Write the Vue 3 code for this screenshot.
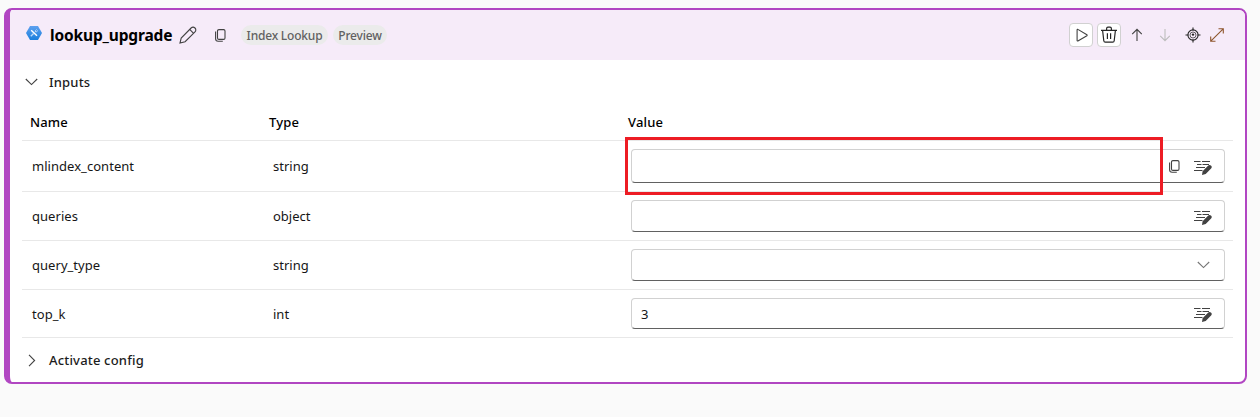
<script setup>
const rows = [
  { name: 'mlindex_content', type: 'string', value: '', h: 51, fh: 34, copy: true },
  { name: 'queries', type: 'object', value: '', h: 49, fh: 32 },
  { name: 'query_type', type: 'string', value: '', h: 49, fh: 32, select: true },
  { name: 'top_k', type: 'int', value: '3', h: 48, fh: 31 }
]
</script>

<template>
  <div class="page">
    <section class="card">
      <header class="head">
        <svg class="logo" width="16" height="14" viewBox="0 0 16 14">
          <defs>
            <linearGradient id="hex" x1="0" y1="0" x2="0" y2="1">
              <stop offset="0" stop-color="#5ea0ef" />
              <stop offset="1" stop-color="#1a7fdd" />
            </linearGradient>
          </defs>
          <path d="M4 0h8l4 7-4 7H4L0 7z" fill="url(#hex)" />
          <path d="M5.2 4.2l5.8 5.6" stroke="#fff" stroke-width="1.4" />
          <path d="M4.8 10.2l3-3" stroke="#b9d8f8" stroke-width="1.3" />
          <path d="M10.6 3.5L9.4 4.7v1h1.2l1.2-1.1" fill="none" stroke="#d5e8fb" stroke-width=".9" />
        </svg>
        <h1 class="title">lookup_upgrade</h1>
        <svg class="pencil" width="18" height="18" viewBox="0 0 18 18">
          <path d="M1 17l1.2-5L12.1 2a2.75 2.75 0 0 1 3.9 3.9L6.1 15.7zM10.7 3.4l3.9 3.9" />
        </svg>
        <svg class="copy" width="11" height="13" viewBox="0 0 11 13">
          <rect x="2.5" y=".6" width="7.5" height="9.8" rx="1.4" />
          <path d="M.6 2.4v7.4a2.5 2.5 0 0 0 2.5 2.5h4.7" />
        </svg>
        <span class="tag index">Index Lookup</span>
        <span class="tag preview">Preview</span>
        <div class="tools">
          <button class="box">
            <svg width="24" height="24" viewBox="0 0 24 24"><path d="M8.1 6.8v10.7a.5.5 0 0 0 .8.4l9-5.2a.6.6 0 0 0 0-1L8.9 6.4a.5.5 0 0 0-.8.4z" /></svg>
          </button>
          <button class="box">
            <svg width="24" height="24" viewBox="0 0 24 24"><path class="dark" d="M4 7.3h16M9.6 7.1V5.7c0-.9.6-1.5 1.4-1.5h2c.8 0 1.4.6 1.4 1.5v1.4M5.6 7.5l1.2 10.3c.1.9.7 1.4 1.5 1.4h7.4c.8 0 1.4-.5 1.5-1.4l1.2-10.3M10.4 10.3v5.7M13.6 10.3v5.7" /></svg>
          </button>
          <svg class="up" width="12" height="14" viewBox="0 0 12 14"><path d="M6 13V1.5M1.2 6.2L6 1.3l4.8 4.9" /></svg>
          <svg class="down" width="12" height="14" viewBox="0 0 12 14"><path d="M6 1v11.5M1.2 7.8L6 12.7l4.8-4.9" /></svg>
          <svg class="target" width="16" height="16" viewBox="0 0 16 16">
            <circle cx="8" cy="8" r="5.1" /><path class="thin" d="M5 8a3 3 0 0 1 6 0 3 3 0 0 1-6 0" /><circle cx="8" cy="7.6" r="1.2" class="dot" />
            <path d="M8 .5v3M8 12.5v3M.5 8h3M12.5 8h3" />
          </svg>
          <svg class="expand" width="14" height="14" viewBox="0 0 14 14"><path d="M.8 13.2L13.2.8M8.5.7h4.8v4.8M.7 8.5v4.8h4.8" /></svg>
        </div>
      </header>

      <div class="group inputs">
        <svg class="chev" width="13" height="8" viewBox="0 0 13 8"><path d="M.8 1l5.7 5.6L12.2 1" /></svg>
        <span>Inputs</span>
      </div>

      <div class="table">
        <div class="row heading">
          <span class="w-name">Name</span><span class="w-type">Type</span><span class="w-value">Value</span>
        </div>
        <div v-for="r in rows" :key="r.name" class="row" :style="{ height: r.h + 'px' }">
          <span class="name">{{ r.name }}</span>
          <span class="type">{{ r.type }}</span>
          <div class="field" :style="{ height: r.fh + 'px' }">
            <span class="val">{{ r.value }}</span>
            <svg v-if="r.copy" class="copy" width="11" height="13" viewBox="0 0 11 13">
              <rect x="2.5" y=".6" width="7.5" height="9.8" rx="1.4" />
              <path d="M.6 2.4v7.4a2.5 2.5 0 0 0 2.5 2.5h4.7" />
            </svg>
            <svg v-if="r.select" class="chev sel" width="13" height="8" viewBox="0 0 13 8"><path d="M.8 1l5.7 5.6L12.2 1" /></svg>
            <svg v-else class="edit" width="18" height="15" viewBox="0 0 18 15">
              <path class="lines" d="M0 1.5h6.5M8 1.5h8M3 4.5h4.5M8.5 4.5h6.5M2 7.5h9M0 10.5h8.5" />
              <path class="pen" d="M8 14.9l.6-3.6 5.4-5.6a2 2 0 0 1 3.1 2.8l-5.4 5.6z" />
            </svg>
          </div>
          <div v-if="r.copy" class="highlight"></div>
        </div>
      </div>

      <div class="group activate">
        <svg class="chev right" width="8" height="13" viewBox="0 0 8 13"><path d="M1 .8l5.6 5.7L1 12.2" /></svg>
        <span>Activate config</span>
      </div>
    </section>
  </div>
</template>

<style>
body { background: #fafafa; }
</style>

<style scoped>
.page {
  box-sizing: border-box;
  height: 417px;
  padding: 8px 13px 33px 4px;
  background: #fafafa;
  font-family: "Noto Sans", "Open Sans", sans-serif;
  font-size: 13px;
  color: #161616;
}
.card {
  box-sizing: border-box;
  height: 376px;
  border: 2px solid #b146c2;
  border-left-width: 6px;
  border-radius: 8px;
  background: #fff;
  overflow: hidden;
}
svg { flex: none; display: block; fill: none; stroke: #424242; stroke-width: 1.1; }
.head { display: flex; align-items: center; height: 50px; background: #f6ebf9; }
.logo { margin: -4px 8px 0 16px; stroke: none; }
.title { margin: 0; width: 129px; font-size: 15.5px; font-weight: 700; line-height: 22px; color: #000; white-space: nowrap; letter-spacing: -.15px; }
.pencil { margin-top: -1px; }
.copy { margin-left: 17px; }
.head .copy { margin-left: 18px; }
.tag { box-sizing: border-box; height: 20px; border-radius: 10px; background: #ebebeb; color: #616161; font-size: 12px; font-weight: 500; line-height: 20px; padding-top: 1px; text-align: center; white-space: nowrap; letter-spacing: -.2px; }
.index { width: 87px; margin-left: 15px; }
.preview { width: 54px; margin-left: 5px; }
.tools { display: flex; align-items: center; margin-left: auto; margin-right: 21px; }
.box { box-sizing: border-box; display: flex; align-items: center; justify-content: center; width: 24px; height: 24px; margin: 0 4px 0 0; padding: 0; border: 1px solid #d1d1d1; border-radius: 4px; background: #fff; }
.dark { stroke: #242424; stroke-width: 1.2; }
.up { margin-left: 6px; }
.down { margin-left: 16px; stroke: #bdbdbd; }
.target { margin-left: 13.5px; margin-right: .5px; stroke: #242424; }
.thin { stroke-width: .7; }
.dot { fill: #242424; stroke: none; }
.expand { margin-left: 9px; margin-top: -1px; stroke: #8e562e; }
.group { display: flex; align-items: center; height: 44px; font-weight: 500; letter-spacing: .18px; color: #1c1c1c; }
.chev { margin-left: 15px; margin-right: 11px; }
.right { margin-left: 18px; margin-right: 13px; }
.table { margin: 0 12px; }
.row { position: relative; box-sizing: border-box; display: flex; align-items: center; border-bottom: 1px solid #e8e8e8; }
.heading { height: 37px; font-weight: 500; letter-spacing: .15px; color: #000; }
.w-name { width: 239px; padding-left: 8px; }
.w-type { width: 359px; }
.name { width: 241px; padding-left: 10px; letter-spacing: .04px; }
.type { width: 358px; }
.field { box-sizing: border-box; display: flex; align-items: center; width: 594px; border: 1px solid #d1d1d1; border-bottom-color: #616161; border-radius: 4px; }
.val { flex: 1; padding-left: 9px; }
.edit { margin: 2px 12px 0 14px; stroke: #424242; }
.lines { stroke-width: 1; }
.pen { fill: #424242; stroke: none; }
.sel { margin-right: 14px; stroke: #757575; }
.highlight { position: absolute; left: 603px; top: -4px; box-sizing: border-box; width: 538px; height: 58px; border: 3px solid #ed1c24; }
</style>
